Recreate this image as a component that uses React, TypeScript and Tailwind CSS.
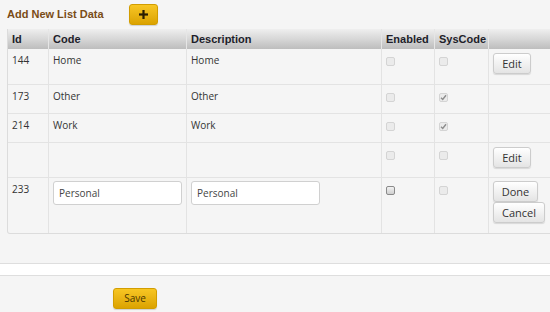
import React from 'react';

type Row = {
  id: string;
  code: string;
  desc: string;
  sys: boolean;
  edit: boolean;
  h: string;
};

const rows: Row[] = [
  { id: '144', code: 'Home', desc: 'Home', sys: false, edit: true, h: 'h-[36px]' },
  { id: '173', code: 'Other', desc: 'Other', sys: true, edit: false, h: 'h-[29px]' },
  { id: '214', code: 'Work', desc: 'Work', sys: true, edit: false, h: 'h-[29px]' },
  { id: '', code: '', desc: '', sys: false, edit: true, h: 'h-[35px]' },
];

const cols = 'grid grid-cols-[41px_138px_195px_53px_54px_1fr]';
const cell = 'border-r border-[#e3e3e3] px-[4px]';

const Box = ({ checked = false, active = false }: { checked?: boolean; active?: boolean }) => (
  <span
    className={
      'mt-[4px] flex h-[9px] w-[9px] items-center justify-center rounded-[2px] border ' +
      (active
        ? 'border-[#8a8a8a] bg-gradient-to-b from-[#f2f2f2] to-[#cfcfcf]'
        : 'border-[#d4d4d4] bg-[#ebebeb]')
    }
  >
    {checked && (
      <svg width="7" height="7" viewBox="0 0 7 7">
        <path d="M1 3.8 L2.7 5.4 L6 1.2" fill="none" stroke="#8c8c8c" strokeWidth="1.4" />
      </svg>
    )}
  </span>
);

const GrayBtn = ({ label, w }: { label: string; w: string }) => (
  <button
    className={
      w +
      ' h-[21px] rounded-[3px] border border-[#cccccc] bg-gradient-to-b from-[#ffffff] to-[#e4e4e4] text-[11px] leading-none text-[#333] shadow-[0_1px_1px_rgba(0,0,0,0.12)]'
    }
  >
    {label}
  </button>
);

export default function App() {
  return (
    <div className="h-[312px] w-[550px] overflow-hidden bg-[#f5f5f5] font-['Open_Sans',sans-serif] text-[10px] text-[#333]">
      <div className="flex h-[29px] items-center pl-[7px]">
        <span className="w-[122px] font-['Liberation_Sans',sans-serif] text-[11px] font-bold text-[#7a4c16]">
          Add New List Data
        </span>
        <button className="flex h-[21px] w-[29px] items-center justify-center rounded-[3px] border border-[#d29d00] bg-gradient-to-b from-[#f8c622] to-[#dba300] shadow-[0_1px_1px_rgba(0,0,0,0.15)]">
          <svg width="9" height="9" viewBox="0 0 9 9">
            <rect x="3.4" y="0" width="2.2" height="9" fill="#2a1d00" />
            <rect x="0" y="3.4" width="9" height="2.2" fill="#2a1d00" />
          </svg>
        </button>
      </div>

      <div className="ml-[7px] w-[548px] rounded-b-[3px] border-x border-b border-[#dcdcdc]">
        <div className={cols + ' h-[20px] bg-gradient-to-b from-[#efefef] via-[#d7d7d7] to-[#bdbdbd] font-["Liberation_Sans",sans-serif] text-[11px] font-bold text-[#1e1e2a]'}>
          {['Id', 'Code', 'Description', 'Enabled', 'SysCode', ''].map((t, i) => (
            <div key={i} className={'flex items-center border-r border-[#e6e6e6] px-[4px]'}>
              {t}
            </div>
          ))}
        </div>

        {rows.map((r, i) => (
          <div key={i} className={cols + ' border-b border-[#e3e3e3] leading-[14px] ' + r.h}>
            <div className={cell + ' pt-[4px]'}>{r.id}</div>
            <div className={cell + ' pt-[4px]'}>{r.code}</div>
            <div className={cell + ' pt-[4px]'}>{r.desc}</div>
            <div className={cell + ' pt-[4px]'}>
              <Box />
            </div>
            <div className={cell + ' pt-[4px]'}>
              <Box checked={r.sys} />
            </div>
            <div className="px-[4px] pt-[4px]">{r.edit && <GrayBtn label="Edit" w="w-[38px]" />}</div>
          </div>
        ))}

        <div className={cols + ' h-[55px] leading-[14px]'}>
          <div className={cell + ' pt-[4px]'}>233</div>
          <div className={cell + ' pt-[3px]'}>
            <input
              defaultValue="Personal"
              className="h-[24px] w-[129px] rounded-[3px] border border-[#d0d0d0] bg-white px-[5px] text-[10px] text-[#444] outline-none"
            />
          </div>
          <div className={cell + ' pt-[3px]'}>
            <input
              defaultValue="Personal"
              className="h-[24px] w-[129px] rounded-[3px] border border-[#d0d0d0] bg-white px-[5px] text-[10px] text-[#444] outline-none"
            />
          </div>
          <div className={cell + ' pt-[4px]'}>
            <Box active />
          </div>
          <div className={cell + ' pt-[4px]'}>
            <Box />
          </div>
          <div className="flex flex-col items-start px-[4px] pt-[3px]">
            <GrayBtn label="Done" w="w-[45px]" />
            <GrayBtn label="Cancel" w="w-[52px]" />
          </div>
        </div>
      </div>

      <div className="mt-[29px] h-[13px] border-y border-[#dedede] bg-white" />

      <div className="mt-[12px] pl-[113px]">
        <button className="h-[21px] w-[44px] rounded-[3px] border border-[#d29d00] bg-gradient-to-b from-[#f8c622] to-[#dba300] text-[10px] text-[#4a3500] shadow-[0_1px_1px_rgba(0,0,0,0.15)]">
          Save
        </button>
      </div>
    </div>
  );
}
